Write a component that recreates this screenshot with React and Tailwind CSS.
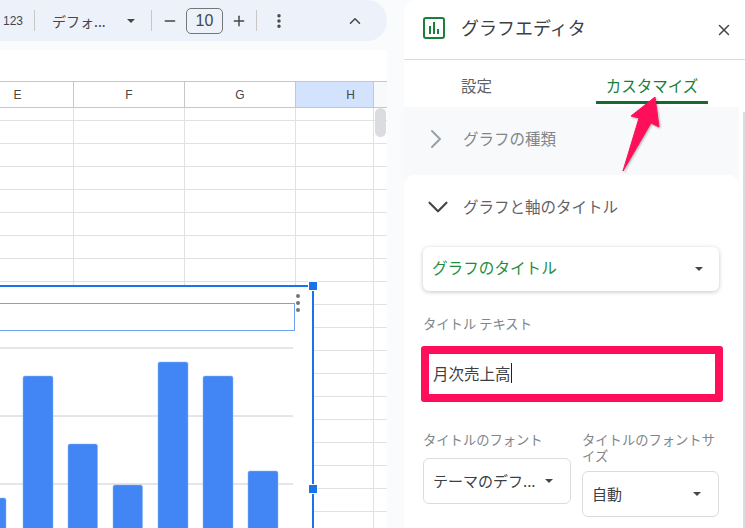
import React from 'react';
import { ChevronDown, ChevronRight, ChevronUp, Minus, Plus, X, EllipsisVertical } from 'lucide-react';

const font = { fontFamily: '"Noto Sans CJK JP", "Noto Sans", sans-serif' };
const rowCount = 18;

function Caret({ className = '' }) {
    return <span className={`w-0 h-0 border-x-[4px] border-x-transparent border-t-[4px] border-t-[#444746] ${className}`} />;
}

function Toolbar() {
    return (
        <div className="h-[41px] w-[387px] rounded-r-[20px] bg-[#edf2fa] flex items-center text-[#444746]">
            <span className="ml-[3px] w-[20px] text-xs" style={{ fontFamily: '"Liberation Sans", sans-serif' }}>123</span>
            <div className="ml-[11px] w-px h-[21px] bg-[#c7c7c7]" />
            <span className="ml-[17px] w-[62px] text-sm whitespace-nowrap">デフォ...</span>
            <Caret className="ml-[13px]" />
            <div className="ml-[16px] w-px h-[21px] bg-[#c7c7c7]" />
            <Minus size={16} strokeWidth={2.2} className="ml-[10px]" />
            <div className="ml-[8px] w-[37px] h-[26px] rounded-[5px] border border-[#747775] flex items-center justify-center text-base" style={{ fontFamily: '"Liberation Sans", sans-serif' }}>10</div>
            <Plus size={16} strokeWidth={2.2} className="ml-[8px]" />
            <div className="ml-[9px] w-px h-[21px] bg-[#c7c7c7]" />
            <EllipsisVertical size={18} strokeWidth={2.6} className="ml-[13px]" />
            <ChevronUp size={18} strokeWidth={2} className="ml-[58px]" />
        </div>
    );
}

function HeaderCell({ label, className }) {
    return (
        <div className={`h-full border-r border-[#c7c7c7] flex items-center justify-center text-xs text-[#444746] ${className}`} style={{ fontFamily: '"Liberation Sans", sans-serif' }}>
            {label}
        </div>
    );
}

function Sheet() {
    return (
        <div className="relative mt-[9px] w-[387px] flex-1 bg-white overflow-hidden">
            <div className="h-[31px]" />
            <div className="h-[27px] flex border-y border-[#c7c7c7]">
                <HeaderCell label="E" className="w-[74px] pr-[38px]" />
                <HeaderCell label="F" className="w-[111px]" />
                <HeaderCell label="G" className="w-[111px]" />
                <HeaderCell label="H" className="w-[78px] bg-[#d3e3fd] pl-[32px] text-[#0b2a66]" />
                <div className="flex-1 bg-[#f8f9fa]" />
            </div>
            <div className="h-[13px] flex border-b border-[#e1e1e1]">
                <Cells />
            </div>
            {Array.from({ length: rowCount }).map((_, i) => (
                <div key={i} className="h-[23px] flex border-b border-[#e1e1e1]">
                    <Cells />
                </div>
            ))}
            <div className="absolute left-[375px] top-[58px] w-[11px] h-[29px] rounded-[6px] bg-[#dadce0]" />
            <Chart />
        </div>
    );
}

function Cells() {
    return (
        <>
            <div className="w-[74px] border-r border-[#e1e1e1]" />
            <div className="w-[111px] border-r border-[#e1e1e1]" />
            <div className="w-[111px] border-r border-[#e1e1e1]" />
            <div className="w-[78px] border-r border-[#e1e1e1]" />
        </>
    );
}

// bars: x, top, width (chart coordinates = page coordinates, y minus 286)
const bars = [
    [-24, 212, 30],
    [23, 90, 30],
    [68, 158, 29.5],
    [113, 199, 29.5],
    [158, 76, 30],
    [203, 90, 30],
    [248, 185, 30],
];

function Chart() {
    return (
        <div className="absolute left-[-4px] top-[235px] w-[318px] h-[260px] bg-white border-t-2 border-r-2 border-[#1a73e8]">
            <svg className="absolute left-[4px] top-[-1px]" width="310" height="250" viewBox="0 0 310 250">
                {[62, 130, 198].map((y) => (
                    <line key={y} x1="0" x2="293" y1={y} y2={y} stroke="#cccccc" strokeWidth="1" />
                ))}
                {bars.map(([x, top, w]) => (
                    <rect key={x} x={x} y={top} width={w} height={260 - top} rx="2" fill="#4285f4" stroke="#8ab4f8" strokeWidth="0.5" />
                ))}
            </svg>
            <div className="relative ml-[-2px] mt-[16px] w-[301px] h-[28px] border border-[#6fa4f5]" />
            <div className="absolute left-[300px] top-[7px] flex flex-col gap-[3px]">
                <span className="w-1 h-1 rounded-full bg-[#757575]" />
                <span className="w-1 h-1 rounded-full bg-[#757575]" />
                <span className="w-1 h-1 rounded-full bg-[#757575]" />
            </div>
            <span className="absolute right-[-6px] top-[-6px] w-2.5 h-2.5 bg-[#1a73e8] border border-white" />
            <span className="absolute right-[-6px] top-[197px] w-2.5 h-2.5 bg-[#1a73e8] border border-white" />
        </div>
    );
}

function ChartIcon() {
    return (
        <svg width="22" height="22" viewBox="0 0 22 22">
            <rect x="1" y="1" width="20" height="20" rx="2" fill="none" stroke="#188038" strokeWidth="2" />
            <rect x="6" y="9" width="2" height="8" fill="#188038" />
            <rect x="10" y="5" width="2" height="12" fill="#188038" />
            <rect x="14" y="12" width="2" height="5" fill="#188038" />
        </svg>
    );
}

function SmallSelect({ label, value, className, gap }) {
    return (
        <div className={className}>
            <div className={`text-[13.3px] leading-[16px] text-[#80868b] ${gap}`}>{label}</div>
            <div className="h-[46px] rounded-[6px] border border-[#dadce0] flex items-center justify-between pl-[9px] pr-[17px] text-[15px] text-[#3c4043]">
                <span className="whitespace-nowrap">{value}</span>
                <Caret />
            </div>
        </div>
    );
}

function Panel() {
    return (
        <div className="w-[341px] h-full bg-white rounded-tl-[12px] flex flex-col overflow-hidden">
            <div className="h-[60px] shrink-0 border-b border-[#dadce0] flex items-center pl-[19px] pr-[12px] pb-[4px]">
                <ChartIcon />
                <span className="ml-[16px] text-[18px] text-[#3c4043]">グラフエディタ</span>
                <X size={18} strokeWidth={2} className="ml-auto mt-[4px] text-[#444746]" />
            </div>
            <div className="h-[47px] shrink-0 flex text-[15.5px]">
                <div className="w-[192px] pl-[57px] pt-[14px] text-[#5f6368] leading-[22px]">設定</div>
                <div className="w-[112px] h-[44px] border-b-[3px] border-[#146c2e] text-center pt-[14px] text-[#188038] leading-[22px] whitespace-nowrap">カスタマイズ</div>
            </div>
            <div className="flex-1 flex">
                <div className="w-[335px] bg-[#f8f9fa] flex flex-col">
                    <div className="h-[68px] shrink-0 flex items-center pl-[16px] pb-[4px] text-[15.5px] text-[#80868b]">
                        <ChevronRight size={32} strokeWidth={1.5} className="text-[#9aa0a6]" />
                        <span className="ml-[11px]">グラフの種類</span>
                    </div>
                    <div className="flex-1 bg-white rounded-t-[10px] pl-[19px] pr-[20px]">
                        <div className="h-[64px] flex items-center text-[15.5px] text-[#5f6368] ml-[-2px]">
                            <ChevronDown size={34} strokeWidth={1.5} className="text-[#444746]" />
                            <span className="ml-[8px]">グラフと軸のタイトル</span>
                        </div>
                        <div className="mt-[8px] h-[44px] rounded-[6px] bg-white shadow-[0_1px_4px_rgba(60,64,67,0.3)] flex items-center justify-between pl-[9px] pr-[16px] pb-[2px] text-[15.6px] text-[#1e8e3e]">
                            <span>グラフのタイトル</span>
                            <Caret className="mt-[2px]" />
                        </div>
                        <div className="mt-[24px] text-[13.3px] leading-[18px] text-[#80868b]">タイトル テキスト</div>
                        <div className="mt-[13px] ml-[-2px] mr-[-4px] h-[56px] rounded-[3px] border-[8px] border-[#ff0f5a] flex items-center pl-[4px] pb-[3px] text-[15.5px] text-[#3c4043]">
                            <span className="border-r border-[#202124] leading-[20px]">月次売上高</span>
                        </div>
                        <div className="mt-[30px] flex items-start gap-[11px]">
                            <SmallSelect label="タイトルのフォント" value="テーマのデフ..." className="w-[148px]" gap="mb-[10px]" />
                            <SmallSelect label="タイトルのフォントサイズ" value="自動" className="w-[137px]" gap="mb-[7px]" />
                        </div>
                    </div>
                </div>
                <div className="flex-1 pl-[4px] pt-[5px]">
                    <div className="h-full bg-[#dadce0] rounded-t-[2px]" />
                </div>
            </div>
        </div>
    );
}

function Arrow() {
    return (
        <svg className="absolute left-[615px] top-[90px] drop-shadow-[1px_1px_1px_rgba(0,0,0,0.3)]" width="55" height="90" viewBox="615 90 55 90">
            <polygon points="655,97 631,116 639,118 623,171 651,123 659,127" fill="#ff0f5a" stroke="#ff0f5a" strokeLinejoin="round" />
        </svg>
    );
}

export default function App() {
    return (
        <div className="relative w-[745px] h-[528px] flex overflow-hidden bg-[#f9fbfd]" style={font}>
            <div className="w-[404px] h-full flex flex-col">
                <Toolbar />
                <Sheet />
            </div>
            <Panel />
            <Arrow />
        </div>
    );
}
